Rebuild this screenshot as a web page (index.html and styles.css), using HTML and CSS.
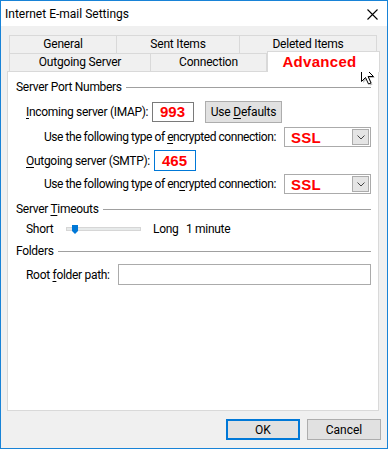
FILE: index.html
```html
<!DOCTYPE html>
<html lang="en">
<head>
	<meta charset="UTF-8">
	<title>Internet E-mail Settings</title>
	<link rel="stylesheet" href="styles.css">
</head>
<body>
	<div class="window">
		<div class="titlebar">
			<span class="title">Internet E-mail Settings</span>
			<svg class="close" width="11" height="11" viewBox="0 0 11 11"><path d="M0.5 0.5 L10.5 10.5 M10.5 0.5 L0.5 10.5" stroke="#000" stroke-width="1.1" fill="none"/></svg>
		</div>

		<div class="content">
			<div class="tabs">
				<div class="tab-row">
					<div class="tab t-general">General</div>
					<div class="tab t-sent">Sent Items</div>
					<div class="tab t-deleted">Deleted Items</div>
				</div>
				<div class="tab-row">
					<div class="tab t-outgoing">Outgoing Server</div>
					<div class="tab t-connection">Connection</div>
					<div class="tab t-advanced selected">Advanced</div>
				</div>
			</div>

			<div class="panel">
				<div class="group g-ports">
					<span>Server Port Numbers</span>
					<div class="line"></div>
				</div>

				<div class="row r-imap">
					<label class="lbl lbl-port"><u>I</u>ncoming server (IMAP):</label>
					<div class="field port">993</div>
					<button class="btn defaults">Use <u>D</u>efaults</button>
				</div>

				<div class="row r-enc1">
					<label class="lbl lbl-enc">Use the following type of <u>e</u>ncrypted connection:</label>
					<div class="select">
						<span class="sel-value">SSL</span>
						<span class="sel-btn"><svg width="8" height="5" viewBox="0 0 8 5"><path d="M0.5 0.5 L4 4 L7.5 0.5" stroke="#444" fill="none"/></svg></span>
					</div>
				</div>

				<div class="row r-smtp">
					<label class="lbl lbl-port2"><u>O</u>utgoing server (SMTP):</label>
					<div class="field port focused">465</div>
				</div>

				<div class="row r-enc2">
					<label class="lbl lbl-enc">Use the following type of en<u>c</u>rypted connection:</label>
					<div class="select">
						<span class="sel-value">SSL</span>
						<span class="sel-btn"><svg width="8" height="5" viewBox="0 0 8 5"><path d="M0.5 0.5 L4 4 L7.5 0.5" stroke="#444" fill="none"/></svg></span>
					</div>
				</div>

				<div class="group g-timeouts">
					<span>Server <u>T</u>imeouts</span>
					<div class="line"></div>
				</div>

				<div class="row r-slider">
					<span class="lbl lbl-short">Short</span>
					<div class="track">
						<svg class="thumb" width="6" height="9" viewBox="0 0 6 9"><path d="M0 0 H6 V6 L3 9 L0 6 Z" fill="#0078d7"/></svg>
					</div>
					<span class="lbl lbl-long">Long</span>
					<span class="lbl">1 minute</span>
				</div>

				<div class="group g-folders">
					<span>Folders</span>
					<div class="line"></div>
				</div>

				<div class="row r-root">
					<label class="lbl lbl-root">Root <u>f</u>older path:</label>
					<div class="field path"></div>
				</div>
			</div>

			<div class="buttons">
				<button class="btn dialog default">OK</button>
				<button class="btn dialog">Cancel</button>
			</div>
		</div>

		<svg class="cursor" width="15" height="23" viewBox="0 0 15 23">
			<path d="M2 2 L2 19 L6 15 L9 21.5 L11.5 20.5 L8.6 14 L14 14 Z" fill="rgba(0,0,0,0.25)" transform="translate(1,1)"/>
			<path d="M1.5 1.5 L1.5 18.5 L5.5 14.5 L8.5 21 L11 20 L8.1 13.5 L13.5 13.5 Z" fill="#fff" stroke="#000" stroke-width="1" stroke-linejoin="miter"/>
		</svg>
	</div>
</body>
</html>
```

FILE: styles.css
```css
* {
	box-sizing: border-box;
}
body {
	margin: 0;
	font-family: Roboto, "Noto Sans", sans-serif;
	font-size: 12px;
	color: #000;
	background: #fff;
}
u {
	text-decoration: underline;
	text-underline-offset: 2px;
}
.window {
	position: relative;
	width: 388px;
	height: 449px;
	border: 1px solid #1883d7;
	background: #f0f0f0;
	display: flex;
	flex-direction: column;
}
.titlebar {
	height: 25px;
	background: #fff;
	display: flex;
	align-items: center;
	justify-content: space-between;
	padding: 0 9px 0 4px;
}
.title {
	font-size: 12px;
}
.close {
	margin-top: 1px;
}
.content {
	flex: 1;
	padding: 9px 0 0 0;
}

/* tabs */
.tabs {
	margin-left: 8px;
	width: 369px;
	letter-spacing: -0.2px;
}
.tab-row {
	display: flex;
	height: 18px;
}
.tab {
	height: 18px;
	border: 1px solid #d9d9d9;
	border-bottom: none;
	background: #f0f0f0;
	text-align: center;
	line-height: 16px;
	white-space: nowrap;
}
.tab + .tab {
	border-left: none;
}
.t-general { width: 108px; }
.t-sent { width: 123px; }
.t-deleted { width: 137px; }
.t-outgoing { width: 142px; }
.t-connection { width: 116px; }
.t-advanced { width: 110px; }
.tab.selected {
	position: relative;
	z-index: 1;
	height: 21px;
	margin-top: -2px;
	margin-right: -2px;
	width: 113px;
	border-left: 1px solid #d9d9d9;
	background: #fff;
	color: #f00;
	font-family: "Liberation Sans", Arial, sans-serif;
	font-weight: bold;
	font-size: 15px;
	line-height: 20px;
	letter-spacing: 0.3px;
	padding-right: 8px;
}

/* panel */
.panel {
	margin-left: 6px;
	width: 372px;
	height: 340px;
	background: #fff;
	border: 1px solid #d9d9d9;
	letter-spacing: -0.3px;
}
.group {
	display: flex;
	align-items: center;
	height: 18px;
	padding: 0 7px 0 8px;
}
.group .line {
	flex: 1;
	border-top: 1px solid #a0a0a0;
	margin-left: 4px;
	margin-top: 1px;
}
.g-ports { margin-top: 6px; }
.g-timeouts { margin-top: 6px; }
.g-folders { margin-top: 2px; }

.row {
	display: flex;
	align-items: center;
	padding-left: 18px;
}
.lbl {
	white-space: nowrap;
}
.r-imap { height: 22px; margin-top: 5px; }
.r-enc1 { height: 20px; margin-top: 4px; padding-left: 36px; }
.r-smtp { height: 21px; margin-top: 3px; }
.r-enc2 { height: 20px; margin-top: 3px; padding-left: 36px; }
.r-slider { height: 22px; margin-top: 0; }
.r-root { height: 21px; margin-top: 4px; }

.lbl-port { width: 126px; }
.lbl-port2 { width: 128px; }
.lbl-enc { width: 240px; letter-spacing: -0.45px; }
.lbl-short { width: 40px; }
.lbl-long { width: 33px; margin-left: 12px; }
.lbl-root { width: 92px; }

.field {
	height: 21px;
	border: 1px solid #7a7a7a;
	background: #fff;
}
.port {
	width: 42px;
	height: 20px;
	color: #f00;
	font-family: "Liberation Sans", Arial, sans-serif;
	font-weight: bold;
	font-size: 15px;
	line-height: 18px;
	letter-spacing: 0;
	padding-left: 7px;
}
.port.focused {
	height: 21px;
	border-color: #0078d7;
	line-height: 19px;
}
.path {
	width: 253px;
	border-color: #ababab;
}

.select {
	width: 87px;
	height: 20px;
	border: 1px solid #ababab;
	background: #fff;
	display: flex;
	align-items: center;
	justify-content: space-between;
	padding: 0 1px 0 6px;
}
.sel-value {
	color: #f00;
	font-family: "Liberation Sans", Arial, sans-serif;
	font-weight: bold;
	font-size: 15px;
	letter-spacing: 0.3px;
}
.sel-btn {
	width: 17px;
	height: 16px;
	background: #e5e5e5;
	border: 1px solid #acacac;
	display: flex;
	align-items: center;
	justify-content: center;
}

.btn {
	font-family: Roboto, "Noto Sans", sans-serif;
	font-size: 12px;
	color: #000;
	background: #e1e1e1;
	border: 1px solid #adadad;
	padding: 0;
	margin: 0;
}
.defaults {
	width: 77px;
	height: 22px;
	margin-left: 11px;
	letter-spacing: -0.2px;
}

.track {
	position: relative;
	width: 75px;
	height: 4px;
	background: #e7eaea;
	border: 1px solid #d6d6d6;
}
.thumb {
	position: absolute;
	left: 5px;
	top: -3px;
}

.buttons {
	display: flex;
	justify-content: flex-end;
	gap: 7px;
	margin-top: 8px;
	padding-right: 6px;
}
.dialog {
	width: 74px;
	height: 21px;
}
.default {
	border: 2px solid #0078d7;
}

.cursor {
	position: absolute;
	left: 359px;
	top: 62px;
}
```
